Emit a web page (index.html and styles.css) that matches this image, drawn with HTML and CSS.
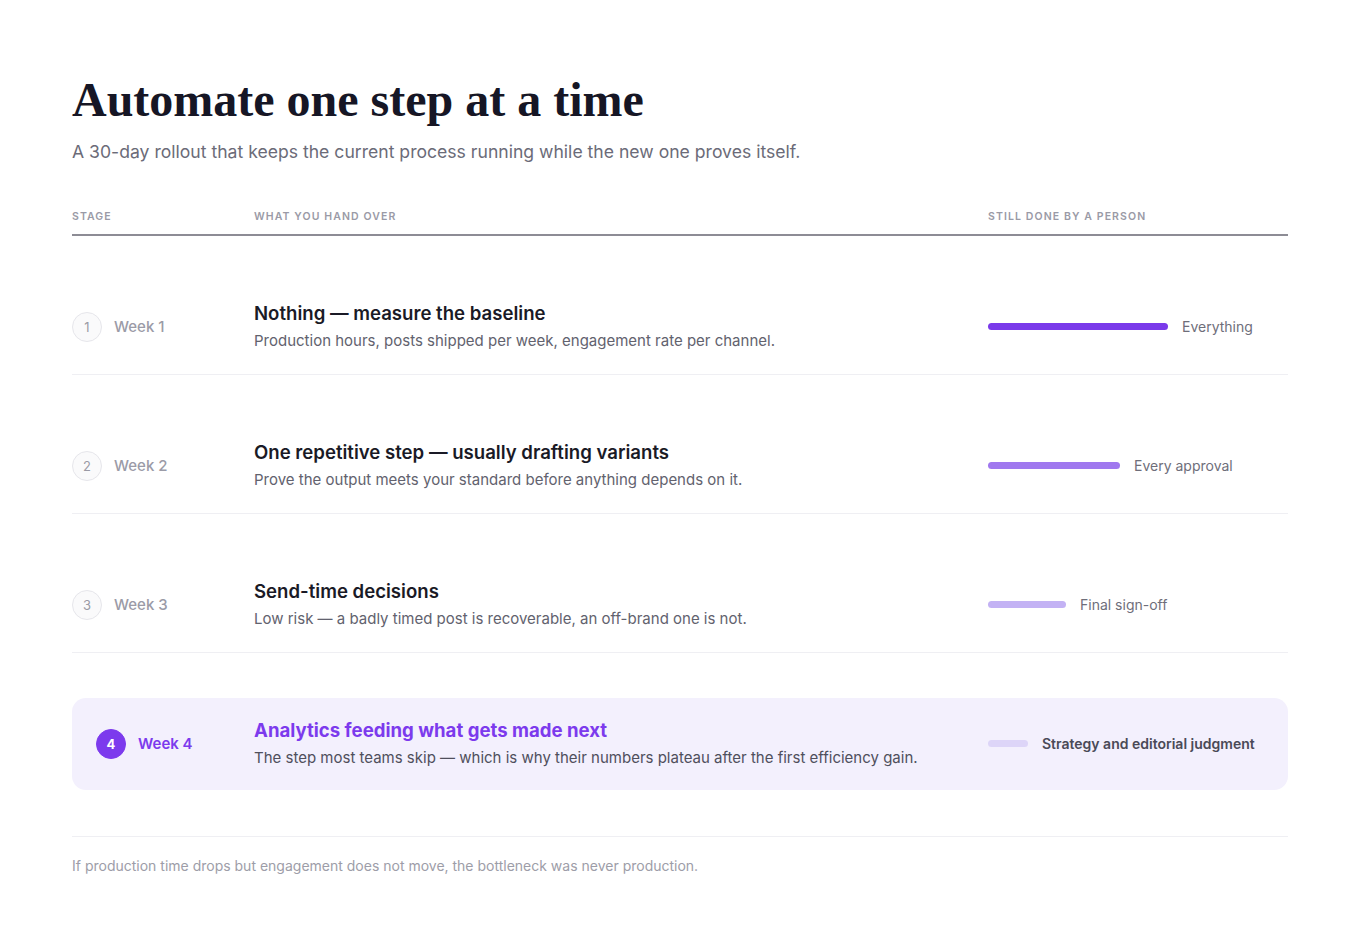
FILE: index.html
```html
<!DOCTYPE html>
<html lang="en">
<head>
<meta charset="utf-8">
<title>Automate one step at a time</title>
<link rel="stylesheet" href="styles.css">
</head>
<body>
<main class="page">
  <h1 class="title">Automate one step at a time</h1>
  <p class="subtitle">A 30-day rollout that keeps the current process running while the new one proves itself.</p>

  <div class="table">
    <div class="head">
      <span>Stage</span>
      <span>What you hand over</span>
      <span>Still done by a person</span>
    </div>

    <div class="row">
      <div class="stage"><span class="num">1</span><span class="week">Week 1</span></div>
      <div class="what">
        <div class="what-title">Nothing — measure the baseline</div>
        <div class="what-desc">Production hours, posts shipped per week, engagement rate per channel.</div>
      </div>
      <div class="person"><span class="bar bar-1" style="width:180px"></span><span class="plabel">Everything</span></div>
    </div>

    <div class="row">
      <div class="stage"><span class="num">2</span><span class="week">Week 2</span></div>
      <div class="what">
        <div class="what-title">One repetitive step — usually drafting variants</div>
        <div class="what-desc">Prove the output meets your standard before anything depends on it.</div>
      </div>
      <div class="person"><span class="bar bar-2" style="width:132px"></span><span class="plabel">Every approval</span></div>
    </div>

    <div class="row">
      <div class="stage"><span class="num">3</span><span class="week">Week 3</span></div>
      <div class="what">
        <div class="what-title">Send-time decisions</div>
        <div class="what-desc">Low risk — a badly timed post is recoverable, an off-brand one is not.</div>
      </div>
      <div class="person"><span class="bar bar-3" style="width:78px"></span><span class="plabel">Final sign-off</span></div>
    </div>

    <div class="row row-current">
      <div class="stage"><span class="num">4</span><span class="week">Week 4</span></div>
      <div class="what">
        <div class="what-title">Analytics feeding what gets made next</div>
        <div class="what-desc">The step most teams skip — which is why their numbers plateau after the first efficiency gain.</div>
      </div>
      <div class="person"><span class="bar bar-4" style="width:40px"></span><span class="plabel">Strategy and editorial judgment</span></div>
    </div>
  </div>

  <p class="note">If production time drops but engagement does not move, the bottleneck was never production.</p>
</main>
</body>
</html>
```

FILE: styles.css
```css
* { box-sizing: border-box; }
html, body { margin: 0; padding: 0; background: #ffffff; }
body {
  font-family: Inter, "Noto Sans", sans-serif;
  color: #1b1b26;
}
.page {
  width: 1216px;
  margin: 0 auto;
  padding-top: 73px;
}
.title {
  margin: 0;
  font-family: "Liberation Serif", "DejaVu Serif", serif;
  font-weight: 700;
  font-size: 48px;
  line-height: 54px;
  color: #161625;
}
.subtitle {
  margin: 13px 0 0;
  font-size: 17.6px;
  line-height: 24px;
  color: #6b6b78;
}
.table { margin-top: 46px; }
.head {
  display: grid;
  grid-template-columns: 182px 1fr 300px;
  padding-bottom: 10px;
  border-bottom: 2px solid #8d8c95;
  font-size: 10.5px;
  font-weight: 600;
  letter-spacing: 1.1px;
  text-transform: uppercase;
  color: #9a9aa6;
  line-height: 14px;
}
.row {
  display: grid;
  grid-template-columns: 182px 1fr 300px;
  align-items: center;
  margin-top: 42px;
  padding: 23px 0 22px;
  border-bottom: 1px solid #efeff3;
}
.row-current {
  grid-template-columns: 158px 1fr 276px;
  padding: 20px 24px 21px;
  border-bottom: none;
  background: #f3f0fd;
  border-radius: 14px;
  margin-top: 45px;
}
.stage { display: flex; align-items: center; gap: 12px; }
.num {
  width: 30px; height: 30px;
  border-radius: 50%;
  border: 1px solid #e6e6eb;
  background: #fafafb;
  display: flex; align-items: center; justify-content: center;
  font-size: 13px;
  color: #9a9aa5;
}
.week { font-size: 15px; font-weight: 500; color: #9b9ba7; }
.what-title { font-size: 18.6px; font-weight: 600; line-height: 25px; color: #1a1a26; }
.what-desc { margin-top: 4px; font-size: 15px; line-height: 22px; color: #62626e; }
.person { display: flex; align-items: center; gap: 14px; }
.bar { display: block; height: 7px; border-radius: 4px; }
.bar-1 { background: #7a3aea; }
.bar-2 { background: #a078ef; }
.bar-3 { background: #c3b2f4; }
.bar-4 { background: #ddd5f8; }
.plabel { font-size: 14px; color: #6e6e7a; }

.row-current .num { background: #7c3aed; border-color: #7c3aed; color: #ffffff; font-weight: 700; }
.row-current .week { color: #7c3aed; font-weight: 600; }
.row-current .what-title { color: #7c3aed; font-weight: 700; }
.row-current .what-desc { color: #4f4f5c; }
.row-current .plabel { color: #4a4a57; font-weight: 600; }

.note {
  margin: 46px 0 0;
  padding-top: 20px;
  border-top: 1px solid #efeff3;
  font-size: 14px;
  line-height: 18px;
  color: #9d9da8;
}
```
